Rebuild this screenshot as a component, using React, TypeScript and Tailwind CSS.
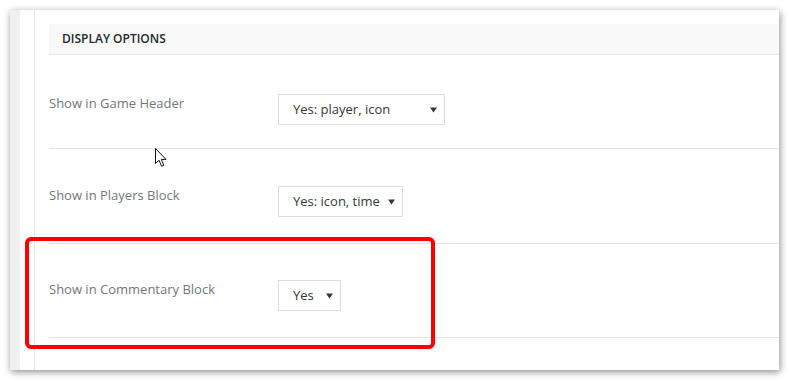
import React from 'react';

interface OptionRowProps {
  label: string;
  value: string;
  selectWidth: string;
  rowClass: string;
}

function SelectArrow() {
  return (
    <svg width="7" height="6" viewBox="0 0 7 6" className="shrink-0">
      <path d="M0 0.5 L7 0.5 L3.5 5.5 Z" fill="#32373c" />
    </svg>
  );
}

function OptionRow({ label, value, selectWidth, rowClass }: OptionRowProps) {
  return (
    <div className={`flex items-start border-b border-[#e5e5e5] ${rowClass}`}>
      <div className="-mt-[1px] w-[229px] shrink-0 text-[13px] leading-[20px] text-[#72777c]">{label}</div>
      <div
        className={`flex h-[31px] items-center justify-between border border-[#dddddd] bg-white pl-[14px] pr-[7px] text-[13px] text-[#32373c] ${selectWidth}`}
      >
        <span className="mt-[1px]">{value}</span>
        <SelectArrow />
      </div>
    </div>
  );
}

function Cursor() {
  return (
    <svg width="13" height="20" viewBox="0 0 13 20" className="absolute left-[145px] top-[138px]">
      <path
        d="M0.5 0.5 L0.5 15.5 L4 12.2 L6.6 18.3 L8.8 17.3 L6.3 11.4 L11 11.4 Z"
        fill="#ffffff"
        stroke="#111111"
        strokeWidth="1"
        strokeLinejoin="miter"
      />
    </svg>
  );
}

export default function App() {
  return (
    <div className="h-[380px] w-[789px] bg-white p-[10px]" style={{ fontFamily: '"Open Sans", "Noto Sans", Arial, sans-serif' }}>
      <div className="relative flex h-[360px] w-[769px] overflow-hidden bg-white shadow-[1px_2px_7px_rgba(0,0,0,0.45)]">
        <div className="w-[10px] shrink-0 bg-[#f0f0f0]" />
        <div className="w-[15px] shrink-0 border-r border-[#e5e5e5]" />
        <div className="flex flex-1 flex-col pl-[14px] pt-[14px]">
          <div className="flex h-[31px] items-center border-b border-[#e5e5e5] bg-[#f9f9f9] pl-[13px]">
            <span className="text-[12px] font-semibold uppercase text-[#23282d]">Display Options</span>
          </div>
          <OptionRow label="Show in Game Header" value="Yes: player, icon" selectWidth="w-[167px]" rowClass="pt-[39px] pb-[23px]" />
          <OptionRow label="Show in Players Block" value="Yes: icon, time" selectWidth="w-[125px]" rowClass="pt-[37px] pb-[26px]" />
          <OptionRow label="Show in Commentary Block" value="Yes" selectWidth="w-[63px]" rowClass="pt-[36px] pb-[26px]" />
        </div>
        <Cursor />
        <div className="absolute left-[15px] top-[227px] h-[112px] w-[410px] rounded-[6px] border-4 border-[#ff0000]" />
      </div>
    </div>
  );
}
